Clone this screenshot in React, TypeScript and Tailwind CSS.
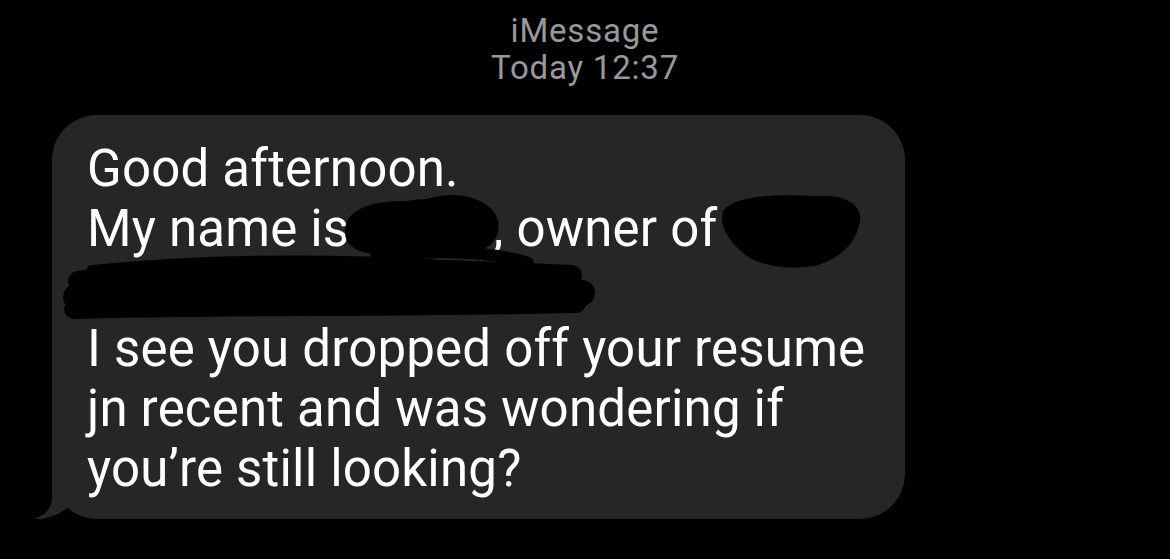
import React from "react"

const BUBBLE = "#262628"

// hand-drawn marker scribbles that hide the name and the business
function Scribbles() {
  return (
    <svg
      className="pointer-events-none absolute left-0 top-0"
      width="853"
      height="404"
      viewBox="0 0 853 404"
      fill="none"
      aria-hidden="true"
    >
      <g stroke="#000" strokeLinecap="round" strokeLinejoin="round">
        {/* name blob */}
        <path d="M298 118 C296 96 330 88 368 92 C396 80 424 84 438 100 C446 112 440 126 428 130 L320 134 C306 132 298 126 298 118 Z" fill="#000" strokeWidth="10" />
        <path d="M330 100 C360 86 404 86 430 102" strokeWidth="12" />
        <path d="M324 142 C380 134 440 136 476 148" strokeWidth="12" />
        <path d="M330 154 C390 148 440 150 470 158" strokeWidth="10" />
        {/* whole third line */}
        <path d="M26 166 C120 150 300 150 520 160" strokeWidth="20" />
        <path d="M24 182 C160 172 360 170 530 178" strokeWidth="26" />
        <path d="M22 194 C160 190 340 192 524 188" strokeWidth="20" />
        <path d="M40 156 C140 146 260 144 380 150" strokeWidth="12" />
        {/* business blob */}
        <path d="M676 98 C686 86 726 84 764 86 C792 84 808 94 802 110 C798 128 782 140 762 146 C734 150 708 146 694 134 C680 122 672 108 676 98 Z" fill="#000" strokeWidth="10" />
        <path d="M678 102 C710 88 764 88 802 100" strokeWidth="10" />
      </g>
    </svg>
  )
}

function Tail() {
  return (
    <svg
      className="absolute -left-[20px] bottom-0"
      width="60"
      height="60"
      viewBox="0 0 60 60"
      aria-hidden="true"
    >
      <path d="M20 0 L20 38 C20 50 12 57 1 60 C12 61 26 57 35 49 L60 0 Z" fill={BUBBLE} />
    </svg>
  )
}

export default function App() {
  return (
    <div className="flex h-[559px] w-[1170px] flex-col overflow-hidden bg-black font-['Roboto',sans-serif]">
      <div className="flex flex-col items-center pt-[12px] text-[33px] leading-[37px] tracking-[0.8px] text-[#98989d]">
        <div>iMessage</div>
        <div>Today 12:37</div>
      </div>

      <div className="relative ml-[52px] mt-[29px] w-[853px] rounded-[45px] bg-[#262628] pl-[35px] pt-[24px] pb-[20px]">
        <Tail />
        <div className="relative text-[51px] leading-[60px] tracking-[0.2px] text-white">
          <div>Good afternoon.</div>
          <div className="flex whitespace-pre">
            <span>My name is</span>
            <span className="inline-block w-[144px]" />
            <span>, owner of</span>
          </div>
          <div>&nbsp;</div>
          <div>I see you dropped off your resume</div>
          <div>jn recent and was wondering if</div>
          <div>you’re still looking?</div>
        </div>
        <Scribbles />
      </div>
    </div>
  )
}
